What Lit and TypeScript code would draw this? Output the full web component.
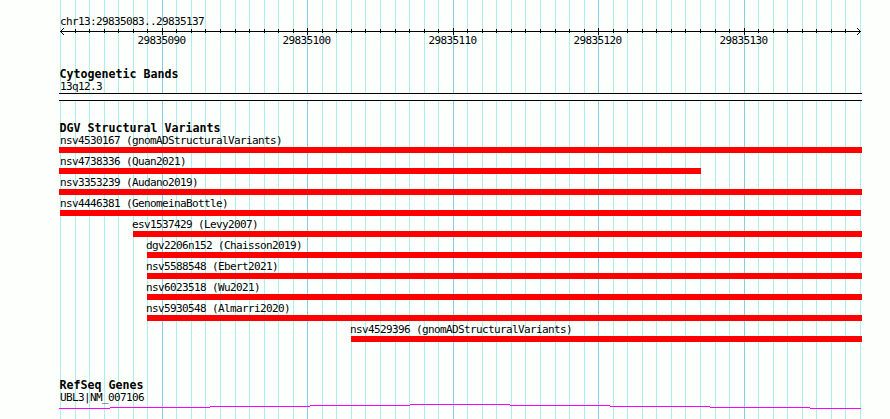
import { LitElement, css, html, svg } from 'lit';
import { customElement, property } from 'lit/decorators.js';

interface Variant {
  label: string;
  start: number;
  end: number;
}

const WIDTH = 890;
const HEIGHT = 419;
const LEFT = 60;
const RIGHT = 860;
const FIRST_BASE = 29835083;
const BASES = 55;

const VARIANTS: Variant[] = [
  { label: 'nsv4530167 (gnomADStructuralVariants)', start: 59, end: 862 },
  { label: 'nsv4738336 (Quan2021)', start: 59, end: 701 },
  { label: 'nsv3353239 (Audano2019)', start: 59, end: 862 },
  { label: 'nsv4446381 (GenomeinaBottle)', start: 60, end: 861 },
  { label: 'esv1537429 (Levy2007)', start: 133, end: 862 },
  { label: 'dgv2206n152 (Chaisson2019)', start: 147, end: 862 },
  { label: 'nsv5588548 (Ebert2021)', start: 147, end: 862 },
  { label: 'nsv6023518 (Wu2021)', start: 147, end: 862 },
  { label: 'nsv5930548 (Almarri2020)', start: 147, end: 862 },
  { label: 'nsv4529396 (gnomADStructuralVariants)', start: 351, end: 862 },
];

const ticks = Array.from({ length: BASES + 1 }, (_, i) => ({
  x: Math.round(LEFT + (i * (RIGHT - LEFT)) / BASES),
  base: FIRST_BASE + i,
  major: (FIRST_BASE + i) % 10 === 0,
}));

/** Coordinate ruler with an arrow at each end. */
@customElement('gb-ruler')
export class GbRuler extends LitElement {
  static styles = css`
    :host {
      display: block;
      height: 53px;
    }
    svg {
      display: block;
    }
    text {
      font: 11px 'DejaVu Sans Mono', monospace;
      letter-spacing: -0.622px;
    }
  `;

  render() {
    return html`<svg width=${WIDTH} height="53" shape-rendering="crispEdges">
      <text x="60" y="25">chr13:29835083..29835137</text>
      <rect x="60" y="31" width="801" height="1" />
      <path
        d="M60.5 31.5l3-3M60.5 31.5l3 3M860.5 31.5l-3-3M860.5 31.5l-3 3"
        fill="none"
        stroke="#000"
        stroke-linecap="square"
      />
      ${ticks.slice(1, -1).map((t) =>
        t.major
          ? svg`<rect x=${t.x} y="28" width="1" height="7" />
              <text x=${t.x - 24.5} y="44">${t.base}</text>`
          : svg`<rect x=${t.x} y="29" width="1" height="4" />`,
      )}
    </svg>`;
  }
}

/** A feature label with its bar underneath. */
@customElement('gb-variant')
export class GbVariant extends LitElement {
  static styles = css`
    :host {
      display: block;
      height: 21px;
    }
    .label {
      height: 12px;
      font: 11px/12px 'DejaVu Sans Mono', monospace;
      letter-spacing: -0.622px;
      white-space: pre;
    }
    .bar {
      height: 6px;
      background: #f00;
    }
  `;

  @property({ attribute: false })
  variant!: Variant;

  render() {
    const { label, start, end } = this.variant;
    return html`
      <div class="label" style="margin-left:${Math.max(LEFT, start - 1)}px">${label}</div>
      <div class="bar" style="margin-left:${start}px;width:${end - start}px"></div>
    `;
  }
}

@customElement('app-root')
export class AppRoot extends LitElement {
  static styles = css`
    :host {
      display: block;
      position: relative;
      width: 890px;
      height: 419px;
      overflow: hidden;
      background: #fdfffc;
      color: #000;
    }
    .grid {
      position: absolute;
      inset: 0;
    }
    .tracks {
      position: relative;
      display: flex;
      flex-direction: column;
    }
    h2 {
      margin: 0;
      padding-left: 59.5px;
      font: bold 11.63px/13px 'DejaVu Sans Mono', monospace;
      white-space: pre;
    }
    .cyto {
      padding-top: 15px;
    }
    .name {
      padding-left: 60px;
      font: 11px/12px 'DejaVu Sans Mono', monospace;
      letter-spacing: -0.622px;
    }
    .band {
      box-sizing: border-box;
      width: 803px;
      height: 8px;
      margin-left: 59px;
      border: solid #000;
      border-width: 1px 0;
      background: #fff;
    }
    .dgv {
      padding-top: 21px;
    }
    .genes {
      padding-top: 34px;
    }
    .gene {
      display: block;
    }
  `;

  private _grid() {
    return html`<svg class="grid" width=${WIDTH} height=${HEIGHT} shape-rendering="crispEdges">
      ${ticks.map(
        (t) =>
          svg`<rect x=${t.x} y="0" width="1" height=${HEIGHT} fill=${t.major ? '#87ceeb' : '#afeeee'} />`,
      )}
    </svg>`;
  }

  private _gene() {
    // the transcript steps up to the middle of the view and back down
    const edges = [59, 110, 210, 310, 410, 510, 610, 710, 810, 861];
    return html`<svg class="gene" width=${WIDTH} height="16" shape-rendering="crispEdges">
      ${edges.slice(0, -1).map(
        (x, i) =>
          svg`<rect x=${x} y=${Math.abs(4 - i)} width=${edges[i + 1] - x} height="1" fill="#f0f" />`,
      )}
    </svg>`;
  }

  render() {
    return html`
      ${this._grid()}
      <div class="tracks">
        <gb-ruler></gb-ruler>
        <section class="cyto">
          <h2>Cytogenetic Bands</h2>
          <div class="name">13q12.3</div>
          <div class="band"></div>
        </section>
        <section class="dgv">
          <h2>DGV Structural Variants</h2>
          ${VARIANTS.map((v) => html`<gb-variant .variant=${v}></gb-variant>`)}
        </section>
        <section class="genes">
          <h2>RefSeq Genes</h2>
          <div class="name">UBL3|NM_007106</div>
          ${this._gene()}
        </section>
      </div>
    `;
  }
}

declare global {
  interface HTMLElementTagNameMap {
    'gb-ruler': GbRuler;
    'gb-variant': GbVariant;
    'app-root': AppRoot;
  }
}
